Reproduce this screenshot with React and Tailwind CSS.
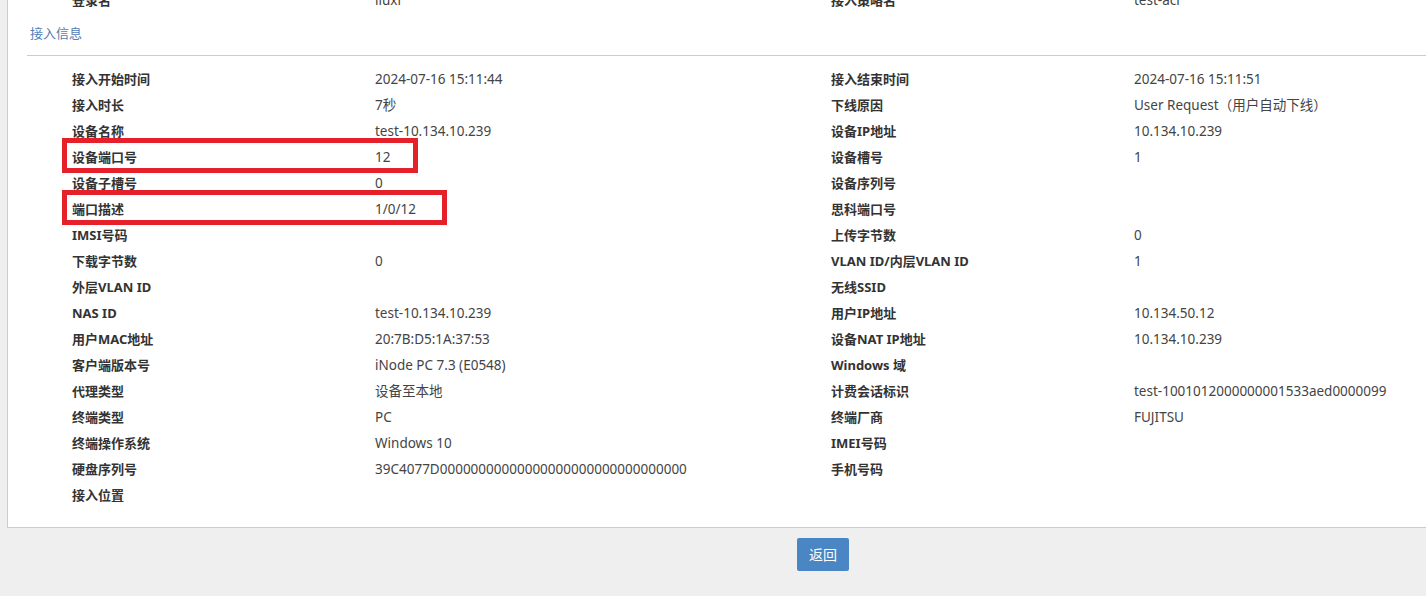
import React from 'react';

const ROWS = [
    ['接入开始时间', '2024-07-16 15:11:44', '接入结束时间', '2024-07-16 15:11:51'],
    ['接入时长', '7秒', '下线原因', 'User Request（用户自动下线）'],
    ['设备名称', 'test-10.134.10.239', '设备IP地址', '10.134.10.239'],
    ['设备端口号', '12', '设备槽号', '1'],
    ['设备子槽号', '0', '设备序列号', ''],
    ['端口描述', '1/0/12', '思科端口号', ''],
    ['IMSI号码', '', '上传字节数', '0'],
    ['下载字节数', '0', 'VLAN ID/内层VLAN ID', '1'],
    ['外层VLAN ID', '', '无线SSID', ''],
    ['NAS ID', 'test-10.134.10.239', '用户IP地址', '10.134.50.12'],
    ['用户MAC地址', '20:7B:D5:1A:37:53', '设备NAT IP地址', '10.134.10.239'],
    ['客户端版本号', 'iNode PC 7.3 (E0548)', 'Windows 域', ''],
    ['代理类型', '设备至本地', '计费会话标识', 'test-1001012000000001533aed0000099'],
    ['终端类型', 'PC', '终端厂商', 'FUJITSU'],
    ['终端操作系统', 'Windows 10', 'IMEI号码', ''],
    ['硬盘序列号', '39C4077D' + '0'.repeat(32), '手机号码', ''],
    ['接入位置', '', '', ''],
];

const Row = ({ row }) => (
    <div className="grid grid-cols-[303px_456px_303px_1fr] h-[26px] leading-[26px] text-[13px]">
        <div className="font-bold text-[#333]">{row[0]}</div>
        <div className="text-[#444] text-[13.5px]">{row[1]}</div>
        <div className="font-bold text-[#333]">{row[2]}</div>
        <div className="text-[#444] text-[13.5px] whitespace-nowrap">{row[3]}</div>
    </div>
);

export default function App() {
    return (
        <div className="min-h-[596px] bg-[#efefef] overflow-hidden" style={{ fontFamily: '"Noto Sans", "Noto Sans CJK SC", sans-serif' }}>
            <div className="relative -mt-[13px] ml-[7px] bg-white border-l border-b border-[#cccccc] pb-[19px]">
                <div className="pl-[64px]">
                    <Row row={['登录名', 'liuxi', '接入策略名', 'test-acl']} />
                </div>
                <div className="mt-[7px] h-[26px] leading-[26px] pl-[22px] text-[13px] text-[#4f7db5]">接入信息</div>
                <div className="mt-[9px] ml-[19px] border-t border-[#cccccc]" />
                <div className="pt-[10px] pl-[64px]">
                    {ROWS.map((row, i) => <Row key={i} row={row} />)}
                </div>
                <div className="absolute left-[54px] top-[151px] w-[356px] h-[35px] border-[5px] border-[#e5202b]" />
                <div className="absolute left-[54px] top-[203px] w-[385px] h-[35px] border-[5px] border-[#e5202b]" />
            </div>
            <div className="mt-[10px] ml-[797px]">
                <button className="w-[52px] h-[33px] bg-[#4a86c4] text-white text-[14px] rounded-[2px]">返回</button>
            </div>
        </div>
    );
}
